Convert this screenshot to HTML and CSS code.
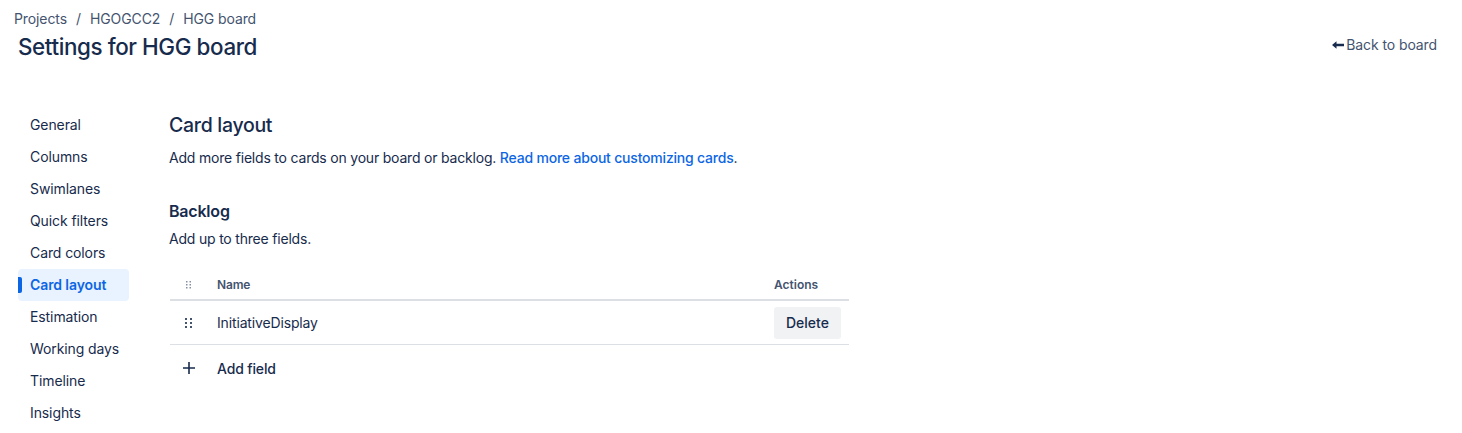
FILE: index.html
```html
<!DOCTYPE html>
<html lang="en">
<head>
<meta charset="utf-8">
<title>Settings for HGG board</title>
<link rel="stylesheet" href="styles.css">
</head>
<body>
<header class="page-header">
  <div class="header-left">
    <nav class="breadcrumbs">
      <a href="#">Projects</a><span class="sep">/</span><a href="#">HGOGCC2</a><span class="sep">/</span><a href="#">HGG board</a>
    </nav>
    <h1 class="page-title">Settings for HGG board</h1>
  </div>
  <a class="back-link" href="#">
    <svg class="back-icon" width="12" height="8" viewBox="0 0 12 8" aria-hidden="true"><path d="M0 4 L4.5 0.3 V2.8 H12 V5.2 H4.5 V7.7 Z" fill="currentColor"/></svg>Back to board
  </a>
</header>
<div class="layout">
  <nav class="sidebar">
    <a class="nav-item" href="#">General</a>
    <a class="nav-item" href="#">Columns</a>
    <a class="nav-item" href="#">Swimlanes</a>
    <a class="nav-item" href="#">Quick filters</a>
    <a class="nav-item" href="#">Card colors</a>
    <a class="nav-item active" href="#">Card layout</a>
    <a class="nav-item" href="#">Estimation</a>
    <a class="nav-item" href="#">Working days</a>
    <a class="nav-item" href="#">Timeline</a>
    <a class="nav-item" href="#">Insights</a>
  </nav>
  <main class="content">
    <h2 class="section-title">Card layout</h2>
    <p class="desc">Add more fields to cards on your board or backlog. <a class="link" href="#">Read more about customizing cards</a>.</p>
    <h3 class="sub-title">Backlog</h3>
    <p class="sub-desc">Add up to three fields.</p>
    <div class="table">
      <div class="row head">
        <div class="cell handle"><svg width="6" height="8" viewBox="0 0 6 8" class="grip small"><g fill="currentColor"><rect x="0" y="0" width="1.5" height="1.5"/><rect x="3.5" y="0" width="1.5" height="1.5"/><rect x="0" y="3" width="1.5" height="1.5"/><rect x="3.5" y="3" width="1.5" height="1.5"/><rect x="0" y="6" width="1.5" height="1.5"/><rect x="3.5" y="6" width="1.5" height="1.5"/></g></svg></div>
        <div class="cell name">Name</div>
        <div class="cell actions">Actions</div>
      </div>
      <div class="row body">
        <div class="cell handle"><svg width="8" height="10" viewBox="0 0 8 10" class="grip"><g fill="currentColor"><rect x="0" y="0" width="2" height="2"/><rect x="5" y="0" width="2" height="2"/><rect x="0" y="4" width="2" height="2"/><rect x="5" y="4" width="2" height="2"/><rect x="0" y="8" width="2" height="2"/><rect x="5" y="8" width="2" height="2"/></g></svg></div>
        <div class="cell name">InitiativeDisplay</div>
        <div class="cell actions"><button class="btn" type="button">Delete</button></div>
      </div>
      <div class="row add">
        <div class="cell handle"><svg width="12" height="12" viewBox="0 0 12 12" class="plus"><path d="M5.2 0h1.6v5.2H12v1.6H6.8V12H5.2V6.8H0V5.2h5.2z" fill="currentColor"/></svg></div>
        <div class="cell name add-label">Add field</div>
      </div>
    </div>
  </main>
</div>
</body>
</html>
```
FILE: styles.css
```css
* { box-sizing: border-box; }
html, body { margin: 0; padding: 0; background: #fff; }
body {
  font-family: Inter, "Noto Sans", "Liberation Sans", sans-serif;
  font-size: 14px;
  color: #172b4d;
  -webkit-font-smoothing: antialiased;
}
a { text-decoration: none; color: inherit; }

.page-header {
  display: flex;
  justify-content: space-between;
  align-items: flex-start;
  padding: 8px 25px 0 14px;
}
.breadcrumbs {
  display: flex;
  align-items: center;
  height: 20px;
  font-size: 14px;
  color: #44546f;
  letter-spacing: -0.1px;
}
.breadcrumbs .sep { padding: 0 9px; }
.page-title {
  margin: 5px 0 0 4px;
  font-size: 22.4px;
  line-height: 28px;
  font-weight: 500;
  color: #172b4d;
  letter-spacing: -0.4px;
}
.back-link {
  display: flex;
  align-items: center;
  margin-top: 27px;
  color: #44546f;
  font-size: 14px;
  line-height: 20px;
  letter-spacing: -0.1px;
}
.back-icon { margin-right: 2px; color: #172b4d; }

.layout {
  display: flex;
  padding: 48px 0 0 18px;
}
.sidebar {
  display: flex;
  flex-direction: column;
  width: 111px;
  flex-shrink: 0;
}
.nav-item {
  position: relative;
  display: flex;
  align-items: center;
  height: 32px;
  padding-left: 12px;
  padding-bottom: 1px;
  border-radius: 4px;
  color: #172b4d;
  font-size: 14px;
  letter-spacing: -0.1px;
}
.nav-item.active {
  background: #e9f2ff;
  color: #0c66e4;
  font-weight: 600;
}
.nav-item.active::before {
  content: "";
  position: absolute;
  left: 0;
  top: 8px;
  width: 4px;
  height: 16px;
  border-radius: 0 2px 2px 0;
  background: #0c66e4;
}

.content {
  margin-left: 41px;
  width: 679px;
}
.section-title {
  margin: 4px 0 0 -1px;
  font-size: 19.5px;
  line-height: 24px;
  font-weight: 500;
  letter-spacing: -0.3px;
}
.desc {
  margin: 11px 0 0 -1px;
  line-height: 20px;
  letter-spacing: -0.2px;
}
.link { color: #0c66e4; font-weight: 500; }
.sub-title {
  margin: 33px 0 0 -1px;
  font-size: 16px;
  line-height: 20px;
  font-weight: 600;
  letter-spacing: -0.2px;
}
.sub-desc {
  margin: 8px 0 0 -1px;
  line-height: 20px;
  letter-spacing: -0.2px;
}

.table { margin-top: 21px; }
.row {
  display: flex;
  align-items: center;
}
.row.head {
  height: 31px;
  border-bottom: 2px solid #dcdfe4;
  font-size: 12px;
  font-weight: 600;
  color: #44546f;
}
.row.body {
  height: 44px;
  border-bottom: 1px solid #dcdfe4;
}
.row.add { height: 46px; font-weight: 500; }
.cell.handle {
  width: 47px;
  display: flex;
  justify-content: flex-start;
  padding-left: 15px;
  color: #44546f;
}
.grip.small { color: #8590a2; margin-left: 1px; }
.plus { color: #172b4d; margin-left: -2px; }
.cell.name { flex: 1; letter-spacing: -0.15px; }
.cell.actions {
  width: 75px;
  padding-right: 8px;
  display: flex;
  justify-content: flex-start;
}
.btn {
  height: 32px;
  padding: 0 12px;
  border: none;
  border-radius: 3px;
  background: #f1f2f4;
  font-family: inherit;
  font-size: 14px;
  font-weight: 500;
  color: #172b4d;
  margin-left: 0;
}
```
